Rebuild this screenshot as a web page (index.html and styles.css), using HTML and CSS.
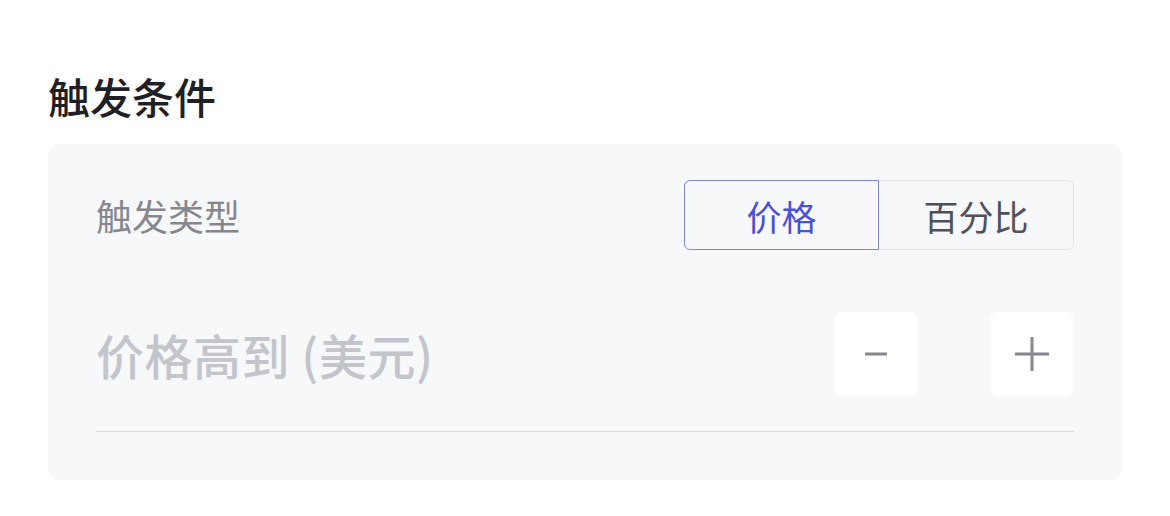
FILE: index.html
```html
<!DOCTYPE html>
<html lang="zh-CN">
<head>
  <meta charset="UTF-8">
  <meta name="viewport" content="width=device-width, initial-scale=1.0">
  <title>触发条件</title>
  <link rel="stylesheet" href="styles.css">
</head>
<body>

  <div class="section">
    <h2 class="section-title">触发条件</h2>

    <div class="card">
      <div class="row type-row">
        <span class="row-label">触发类型</span>
        <div class="segmented">
          <button class="seg-item active">价格</button>
          <button class="seg-item">百分比</button>
        </div>
      </div>

      <div class="row price-row">
        <span class="price-placeholder">价格高到 (美元)</span>
        <div class="stepper">
          <button class="step-btn" aria-label="减少">
            <svg width="24" height="24" viewBox="0 0 24 24"><path d="M1 12h22" stroke="#86868f" stroke-width="3"/></svg>
          </button>
          <button class="step-btn" aria-label="增加">
            <svg width="36" height="36" viewBox="0 0 36 36"><path d="M1 18h34M18 1v34" stroke="#86868f" stroke-width="3"/></svg>
          </button>
        </div>
      </div>
    </div>
  </div>

</body>
</html>
```

FILE: styles.css
```css
body {
  margin: 0;
  background-color: #fff;
  font-family: "Noto Sans CJK SC", "Noto Sans", sans-serif;
}
.section {
  padding: 70px 48px 36px 48px;
}
.section-title {
  margin: 0 0 22px 0;
  font-size: 42px;
  font-weight: 500;
  line-height: 52px;
  color: #1f1f26;
}
.card {
  background-color: #f7f8fa;
  border-radius: 12px;
  padding: 36px 48px 48px 48px;
}
.row {
  display: flex;
  align-items: center;
  justify-content: space-between;
}
.row-label {
  font-size: 36px;
  color: #86868f;
}
.segmented {
  display: flex;
}
.seg-item {
  width: 195px;
  height: 70px;
  font-family: inherit;
  font-size: 35px;
  color: #50505a;
  background: #f7f8fa;
  border: 1px solid #e3e4e8;
  padding: 0;
  cursor: pointer;
}
.seg-item:first-child {
  border-radius: 6px 0 0 6px;
  border-right: none;
}
.seg-item:last-child {
  border-radius: 0 6px 6px 0;
  border-left: none;
}
.seg-item.active {
  color: #4a50d8;
  border: 1px solid #7f84e2;
}
.price-row {
  margin-top: 62px;
  padding-bottom: 35px;
  border-bottom: 1px solid #dcdde2;
}
.price-placeholder {
  font-size: 48px;
  font-weight: 500;
  letter-spacing: 0.5px;
  color: #c4c5cc;
}
.stepper {
  display: flex;
  gap: 72px;
}
.step-btn {
  width: 84px;
  height: 84px;
  background-color: #fff;
  border: none;
  border-radius: 8px;
  display: flex;
  align-items: center;
  justify-content: center;
  padding: 0;
}
```
